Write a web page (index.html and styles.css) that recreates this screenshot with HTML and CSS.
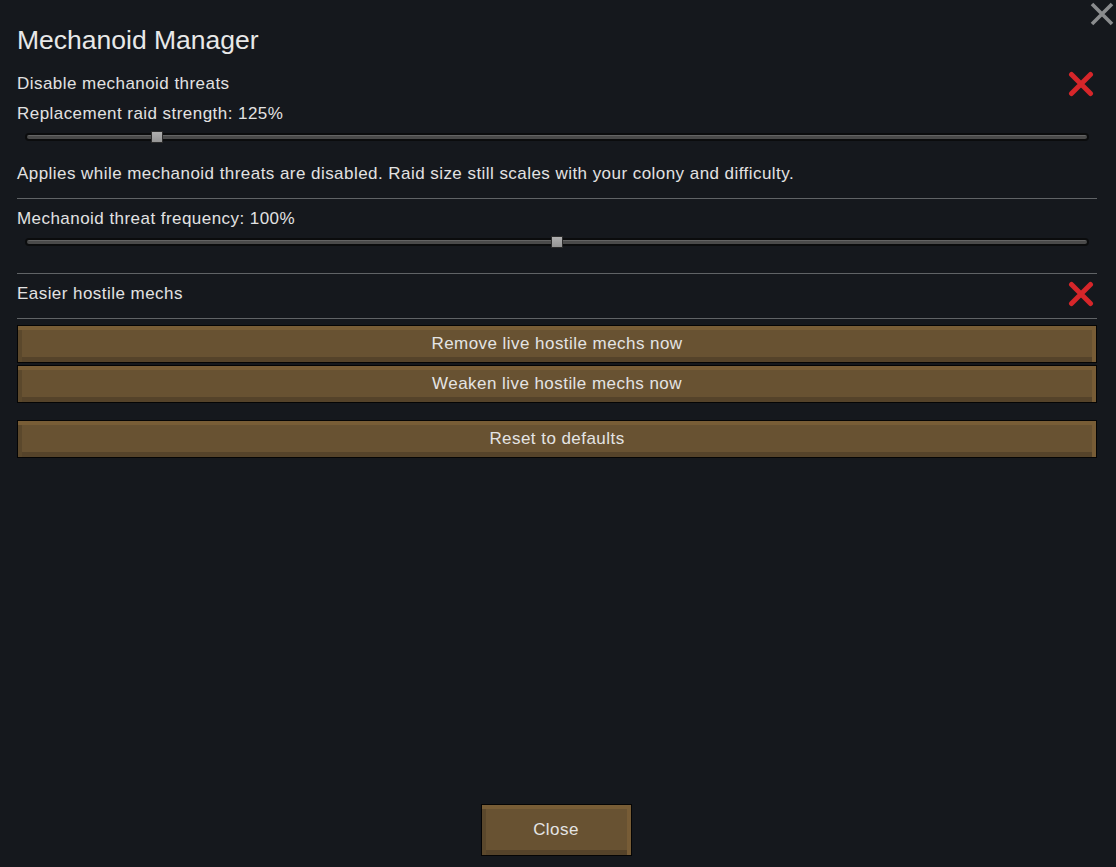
FILE: index.html
```html
<!DOCTYPE html>
<html>
<head>
<meta charset="utf-8">
<link rel="stylesheet" href="styles.css">
</head>
<body>
<div class="window">
  <button class="close-x" aria-label="close">
    <svg width="24" height="24" viewBox="0 0 24 24"><path d="M2 2 L22 22 M22 2 L2 22" stroke="#8a8c8e" stroke-width="3.6" stroke-linecap="butt"/></svg>
  </button>
  <h1 class="title">Mechanoid Manager</h1>

  <div class="row check-row first">
    <span>Disable mechanoid threats</span>
    <svg class="xmark" width="26" height="26" viewBox="0 0 26 26"><path d="M3.5 3.5 L22.5 22.5 M22.5 3.5 L3.5 22.5" stroke="#d6262a" stroke-width="5" stroke-linecap="round"/></svg>
  </div>
  <div class="row label-row">Replacement raid strength: 125%</div>
  <div class="slider">
    <div class="track"></div>
    <div class="thumb" style="left: 12.4%"></div>
  </div>
  <div class="row note">Applies while mechanoid threats are disabled. Raid size still scales with your colony and difficulty.</div>
  <div class="divider d1"></div>

  <div class="row label-row freq">Mechanoid threat frequency: 100%</div>
  <div class="slider">
    <div class="track"></div>
    <div class="thumb" style="left: 50%"></div>
  </div>
  <div class="divider d2"></div>

  <div class="row check-row easier">
    <span>Easier hostile mechs</span>
    <svg class="xmark" width="26" height="26" viewBox="0 0 26 26"><path d="M3.5 3.5 L22.5 22.5 M22.5 3.5 L3.5 22.5" stroke="#d6262a" stroke-width="5" stroke-linecap="round"/></svg>
  </div>
  <div class="divider d3"></div>

  <button class="btn b1">Remove live hostile mechs now</button>
  <button class="btn b2">Weaken live hostile mechs now</button>
  <button class="btn b3">Reset to defaults</button>

  <div class="footer">
    <button class="btn close-btn">Close</button>
  </div>
</div>
</body>
</html>
```

FILE: styles.css
```css
html, body {
  margin: 0;
  padding: 0;
  background: #15181d;
  height: 100%;
}
body {
  font-family: "Liberation Sans", Arial, sans-serif;
  color: #e2e2e2;
}
.window {
  position: relative;
  box-sizing: border-box;
  height: 867px;
  padding: 25px 19px 11px 17px;
  display: flex;
  flex-direction: column;
}
.close-x {
  position: absolute;
  top: 2px;
  right: 2px;
  width: 24px;
  height: 24px;
  padding: 0;
  border: 0;
  background: none;
}
.close-x svg { display: block; }
.title {
  margin: 0;
  height: 30px;
  line-height: 30px;
  font-size: 26.5px;
  font-weight: normal;
  color: #e8e8e8;
}
.row {
  font-size: 17px;
  letter-spacing: 0.45px;
  display: flex;
  align-items: center;
}
.check-row {
  height: 25px;
  justify-content: space-between;
}
.check-row .xmark { margin-right: 3px; display: block; }
.first { margin-top: 16px; }
.label-row {
  height: 25px;
  margin-top: 5px;
}
.freq { margin-top: 8px; height: 24px; }
.slider {
  position: relative;
  height: 22px;
  margin: 0 8px;
}
.track {
  position: absolute;
  left: 0;
  right: 0;
  top: 7px;
  height: 8px;
  box-sizing: border-box;
  border: 2px solid #0b0c0d;
  border-radius: 4px;
  background: linear-gradient(#646464 0, #646464 1px, #4a4a4a 1px);
}
.thumb {
  position: absolute;
  top: 5px;
  width: 12px;
  height: 12px;
  margin-left: -6px;
  box-sizing: border-box;
  border: 1px solid #2b2b2b;
  background: linear-gradient(#b0b0b0, #949494);
}
.note {
  height: 23px;
  margin-top: 14px;
}
.divider {
  height: 1px;
  background: #606366;
}
.d1 { margin-top: 13px; }
.d2 { margin-top: 20px; }
.easier { margin-top: 7px; }
.d3 { margin-top: 12px; }
.btn {
  display: block;
  box-sizing: border-box;
  width: 100%;
  height: 38px;
  padding: 0;
  border: 1px solid #050505;
  background: #685232;
  box-shadow:
    inset 0 4px 0 #785d36,
    inset -4px 0 0 #775c36,
    inset 4px 0 0 #5b482c,
    inset 0 -5px 0 #55432a;
  font-family: "Liberation Sans", Arial, sans-serif;
  font-size: 17px;
  letter-spacing: 0.45px;
  color: #e4e4e4;
  text-align: center;
}
.b1 { margin-top: 6px; }
.b2 { margin-top: 2px; }
.b3 { margin-top: 17px; }
.footer {
  margin-top: auto;
  display: flex;
  justify-content: center;
}
.close-btn {
  width: 151px;
  height: 52px;
  margin-right: 2px;
}
```
